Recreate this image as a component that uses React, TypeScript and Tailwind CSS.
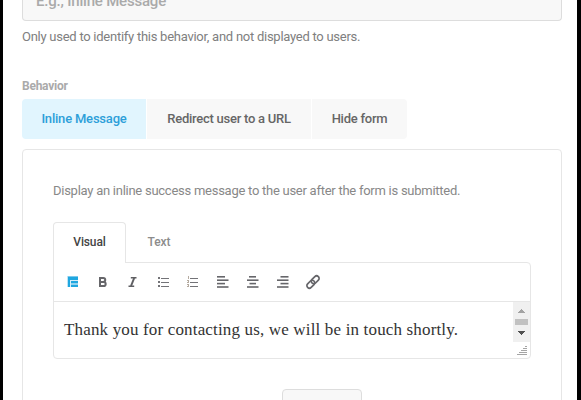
import React from "react";

const choices = [
  { label: "Inline Message", style: "w-[124px] rounded-l bg-[#e1f5fe] text-[#2d9fd9]", tracking: "tracking-[-0.2px]" },
  { label: "Redirect user to a URL", style: "w-[164px] bg-[#f8f8f8] text-[#666]", tracking: "tracking-[-0.25px]" },
  { label: "Hide form", style: "w-[95px] rounded-r bg-[#f8f8f8] text-[#666]", tracking: "tracking-[-0.25px]" },
];

function Lines({ rows }: { rows: [number, number][] }) {
  return (
    <svg width="14" height="14" viewBox="0 0 14 14" fill="#66666a">
      {rows.map(([x, w], i) => (
        <rect key={i} x={x} y={1 + i * 3.4} width={w} height={1.6} />
      ))}
    </svg>
  );
}

function Toolbar() {
  return (
    <div className="flex h-[39px] items-center gap-4 border-b border-[#e6e6e6] pl-3">
      <svg width="14" height="14" viewBox="0 0 14 14">
        <path fill="#7cc9ec" d="M1.5 1H12v11H1.5z" />
        <path fill="#1fa7e0" d="M2 2h10v3H2zM2 5h2v7H2zM5 6h7v2.5H5zM5 9.5h7V12H5z" />
        <path stroke="#d5eef9" strokeWidth="1" d="M4.5 5.5V12M4 5.5h8M5 9h7" />
      </svg>
      <svg width="14" height="14" viewBox="0 0 14 14">
        <path fill="none" stroke="#66666a" strokeWidth="2" d="M4 3h3.3a1.9 1.9 0 0 1 0 3.9H4m0 0h3.6a2.1 2.1 0 0 1 0 4.2H4zM4 2v10.1" />
      </svg>
      <svg width="14" height="14" viewBox="0 0 14 14">
        <path fill="none" stroke="#5f5f63" strokeWidth="1.5" d="M4.8 2.8h5.7M2.5 11.3h5.7" />
        <path fill="none" stroke="#5f5f63" strokeWidth="2" d="M8.2 3 5 11" />
      </svg>
      <svg width="14" height="14" viewBox="0 0 14 14" shapeRendering="crispEdges" fill="#737377">
        <path d="M2 2h2v2H2zM2 6h2v2H2zM2 10h2v2H2zM5 3h8v1H5zM5 7h8v1H5zM5 11h8v1H5z" />
      </svg>
      <svg width="14" height="14" viewBox="0 0 14 14" shapeRendering="crispEdges">
        <path fill="#737377" d="M4 3h8v1H4zM4 7h8v1H4zM4 11h8v1H4z" />
        <path fill="#b5aba0" d="M2 1h1v3H2zM1 5h2v1H1zM2 6h1v1H2zM1 7h2v1H1zM1 9h2v1H1zM2 10h1v1H2zM1 11h2v1H1z" />
      </svg>
      <Lines rows={[[1, 8], [1, 11.5], [1, 8], [1, 11.5]]} />
      <Lines rows={[[3, 7], [1, 11.5], [3.5, 6.5], [1, 11.5]]} />
      <Lines rows={[[4.5, 8], [1, 11.5], [4.5, 8], [1, 11.5]]} />
      <svg width="14" height="14" viewBox="0 0 14 14" className="overflow-visible" fill="none" stroke="#66666a" strokeWidth="1.7">
        <g transform="translate(7 7) rotate(-45)">
          <rect x="-7.6" y="-2.5" width="9" height="5" rx="2.5" />
          <rect x="-1.4" y="-2.5" width="9" height="5" rx="2.5" />
        </g>
      </svg>
    </div>
  );
}

function Editor() {
  return (
    <div className="mt-[21px] w-[478px]">
      <div className="flex h-10 text-[12px] leading-[39px]">
        <div className="z-10 -mb-px h-[41px] w-[73px] rounded-t border border-b-0 border-[#e6e6e6] bg-white text-center font-medium tracking-[-0.15px] text-[#444]">Visual</div>
        <div className="w-[66px] pt-px text-center font-medium text-[#8c8c8c]">Text</div>
      </div>
      <div className="h-[97px] rounded-b rounded-tr border border-[#e6e6e6]">
        <Toolbar />
        <div className="flex h-[56px] justify-between">
          <p className="whitespace-nowrap pl-[10px] pt-[16px] font-['Liberation_Serif',serif] text-[17px] leading-6 tracking-[0.16px] text-[#333]"><span>Thank you for contacting us, we will be in touch shortly.</span></p>
          <div className="flex w-[17px] flex-col">
            <div className="flex h-10 flex-col items-center bg-[#f0f0f0]">
              <svg width="17" height="40" viewBox="0 0 17 40" shapeRendering="crispEdges">
                <path fill="#a3a3a3" d="M8 7h1v1h1v1h1v1h1v1H5v-1h1V9h1V8h1z" />
                <path fill="#c1c1c1" d="M2 17h13v6H2z" />
                <path fill="#505050" d="M5 29h7v1h-1v1h-1v1H9v1H8v-1H7v-1H6v-1H5z" />
              </svg>
            </div>
            <svg width="17" height="16" viewBox="0 0 17 16" shapeRendering="crispEdges" stroke="#a5a5a5">
              <path d="M12 4.5h2M10 6.5h4M8 8.5h6M6 10.5h8M4 12.5h10" />
            </svg>
          </div>
        </div>
      </div>
    </div>
  );
}

export default function App() {
  return (
    <div className="h-[400px] w-[581px] overflow-hidden border-l-[3px] border-r-4 border-black bg-white pl-[19px] font-['Roboto',sans-serif]">
      <div className="h-[21px] w-[540px] overflow-hidden rounded-b border border-t-0 border-[#ddd] bg-[#f8f8f8] pl-[13px]">
        <div className="-mt-[9px] text-[15px] font-medium leading-5 tracking-[-0.2px] text-[#aaa]"><span>E.g., Inline Message</span></div>
      </div>
      <p className="mt-[6px] h-5 whitespace-nowrap text-[13px] leading-5 tracking-[-0.26px] text-[#808080]"><span>Only used to identify this behavior, and not displayed to users.</span></p>
      <h2 className="mt-[31px] h-[21px] text-[12px] font-bold leading-4 tracking-[-0.25px] text-[#aaa]"><span>Behavior</span></h2>
      <div className="flex h-10 gap-px">
        {choices.map((choice) => (
          <button key={choice.label} className={`${choice.style} ${choice.tracking} whitespace-nowrap text-[13px] font-medium`}>{choice.label}</button>
        ))}
      </div>
      <section className="mt-[10px] h-[270px] w-[540px] rounded-t border border-[#e6e6e6] pl-[30px]">
        <p className="mt-[31px] h-5 whitespace-nowrap text-[13px] leading-5 tracking-[-0.26px] text-[#888]"><span>Display an inline success message to the user after the form is submitted.</span></p>
        <Editor />
        <div className="ml-[229px] mt-[30px] h-10 w-20 rounded border border-[#ddd] bg-[#f8f8f8]" />
      </section>
    </div>
  );
}
